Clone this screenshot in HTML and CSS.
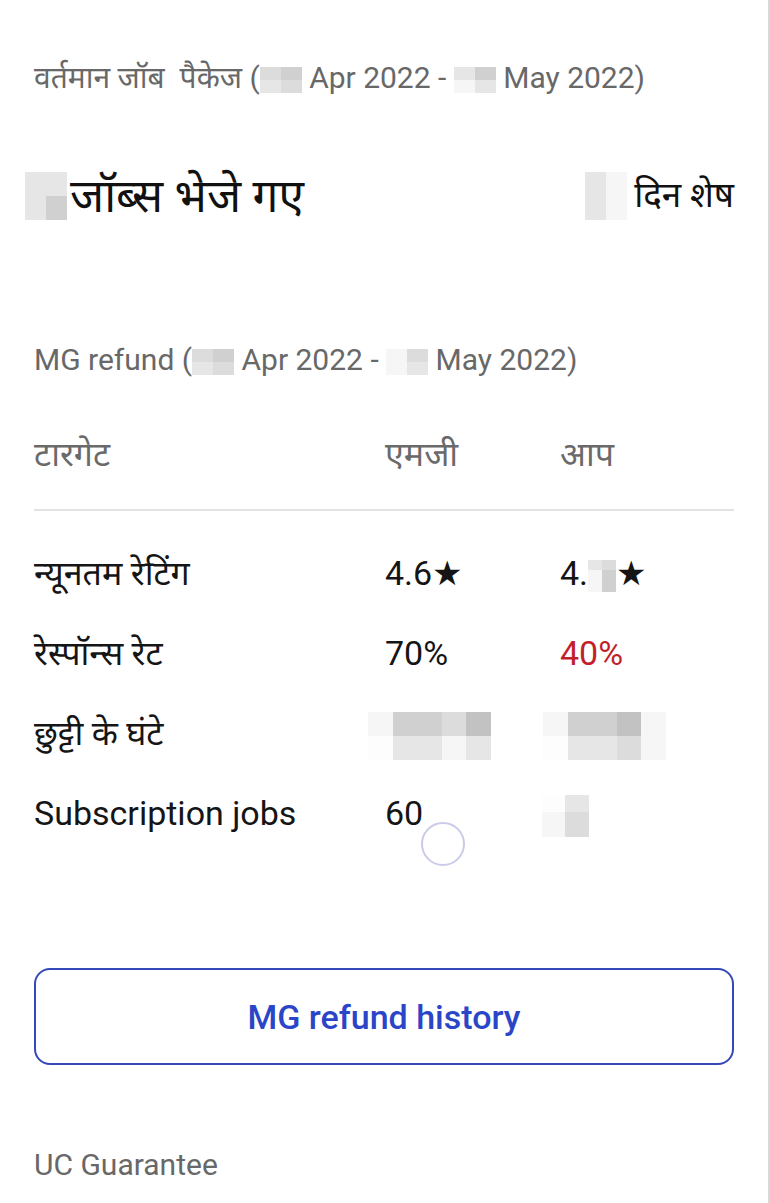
FILE: index.html
```html
<!DOCTYPE html>
<html lang="hi">
<head>
    <meta charset="UTF-8">
    <meta name="viewport" content="width=device-width, initial-scale=1.0">
    <title>MG refund</title>
    <link rel="stylesheet" href="styles.css">
</head>
<body>
    <div class="page">
        <p class="period">वर्तमान जॉब&nbsp; पैकेज (<span class="blur blur-sm"><i class="c2"></i><i class="c3"></i><i class="c1"></i><i class="c2"></i></span> Apr 2022 - <span class="blur blur-sm"><i class="c1"></i><i class="c3"></i><i class="c0"></i><i class="c1"></i></span> May 2022)</p>

        <div class="summary">
            <div class="summary-item">
                <span class="blur blur-lg"><i class="c1"></i><i class="c1"></i><i class="c1"></i><i class="c3"></i></span>
                <span class="jobs-sent">जॉब्स भेजे गए</span>
            </div>
            <div class="summary-item">
                <span class="blur blur-lg"><i class="c1"></i><i class="c0"></i><i class="c1"></i><i class="c0"></i></span>
                <span class="days-left">दिन शेष</span>
            </div>
        </div>

        <p class="period refund-title">MG refund (<span class="blur blur-sm"><i class="c2"></i><i class="c3"></i><i class="c1"></i><i class="c2"></i></span> Apr 2022 - <span class="blur blur-sm"><i class="c0"></i><i class="c2"></i><i class="c0"></i><i class="c1"></i></span> May 2022)</p>

        <div class="targets">
            <div class="row head">
                <span>टारगेट</span>
                <span>एमजी</span>
                <span>आप</span>
            </div>
            <div class="rows">
                <div class="row">
                    <span>न्यूनतम रेटिंग</span>
                    <span>4.6★</span>
                    <span>4.<span class="blur blur-star"><i class="c1"></i><i class="c2"></i><i class="c0"></i><i class="c3"></i></span>★</span>
                </div>
                <div class="row">
                    <span>रेस्पॉन्स रेट</span>
                    <span>70%</span>
                    <span class="low">40%</span>
                </div>
                <div class="row">
                    <span>छुट्टी के घंटे</span>
                    <span><span class="blur blur-wide"><i class="c0"></i><i class="c3"></i><i class="c3"></i><i class="c2"></i><i class="c4"></i><i class="c5"></i><i class="c1"></i><i class="c1"></i><i class="c0"></i><i class="c1"></i></span></span>
                    <span><span class="blur blur-wide"><i class="c0"></i><i class="c3"></i><i class="c3"></i><i class="c4"></i><i class="c0"></i><i class="c5"></i><i class="c1"></i><i class="c1"></i><i class="c2"></i><i class="c0"></i></span></span>
                </div>
                <div class="row">
                    <span>Subscription jobs</span>
                    <span>60</span>
                    <span><span class="blur blur-narrow"><i class="c5"></i><i class="c1"></i><i class="c0"></i><i class="c2"></i></span></span>
                </div>
            </div>
            <span class="touch"></span>
        </div>

        <button class="history-btn" type="button">MG refund history</button>

        <p class="period guarantee">UC Guarantee</p>
    </div>
</body>
</html>
```

FILE: styles.css
```css
body {
    margin: 0;
    padding: 0;
    background: #fff;
    font-family: Roboto, "Noto Sans", sans-serif;
    color: #1a1a1a;
}
.page {
    box-sizing: border-box;
    width: 770px;
    min-height: 1203px;
    padding: 58px 34px 0 34px;
    border-right: 2px solid #d8d8d8;
}
p {
    margin: 0;
}
.period {
    font-size: 30px;
    line-height: 40px;
    color: #686868;
    white-space: nowrap;
}

/* pixelated (hidden) values */
.blur {
    display: inline-grid;
    vertical-align: middle;
}
.blur i {
    display: block;
}
.blur-sm {
    grid-template-columns: 21px 21px;
    grid-template-rows: 13px 13px;
}
.blur-lg {
    grid-template-columns: 21px 21px;
    grid-template-rows: 24px 24px;
}
.blur-star {
    grid-template-columns: 14px 14px;
    grid-template-rows: 10px 22px;
}
.blur-wide {
    grid-template-columns: repeat(5, 24.5px);
    grid-template-rows: 24px 24px;
    margin-left: -17px;
}
.blur-narrow {
    grid-template-columns: 23px 24px;
    grid-template-rows: 17px 25px;
    margin-left: -18px;
}
.c0 { background: #f6f6f6; }
.c1 { background: #e6e6e6; }
.c2 { background: #dcdcdc; }
.c3 { background: #d0d0d0; }
.c4 { background: #c2c2c2; }
.c5 { background: #fdfdfd; }

.summary {
    display: flex;
    justify-content: space-between;
    align-items: center;
    margin: 74px 0 0 -9px;
    height: 48px;
}
.summary-item {
    display: flex;
    align-items: center;
    gap: 3px;
}
.jobs-sent {
    font-size: 46px;
    line-height: 48px;
    color: #111;
}
.days-left {
    font-size: 35px;
    line-height: 48px;
    color: #111;
    margin-left: 4px;
}
.refund-title {
    margin-top: 120px;
}

.targets {
    position: relative;
    margin-top: 54px;
}
.row {
    display: grid;
    grid-template-columns: 351px 175px 1fr;
    font-size: 34px;
    line-height: 80px;
    color: #151515;
}
.row.head {
    line-height: 40px;
    padding-bottom: 35px;
    border-bottom: 2px solid #e2e2e2;
    color: #6a6a6a;
}
.rows {
    margin-top: 22px;
}
.low {
    color: #c21f2b;
}
.touch {
    position: absolute;
    left: 387px;
    top: 388px;
    width: 40px;
    height: 40px;
    border: 2px solid #c9cbe8;
    border-radius: 50%;
}

.history-btn {
    display: block;
    width: 100%;
    height: 97px;
    margin-top: 115px;
    background: #fff;
    border: 2px solid #3448b8;
    border-radius: 16px;
    color: #2a45c8;
    font-family: Roboto, sans-serif;
    font-size: 34px;
    font-weight: 500;
    cursor: pointer;
}
.guarantee {
    margin-top: 80px;
}
```
